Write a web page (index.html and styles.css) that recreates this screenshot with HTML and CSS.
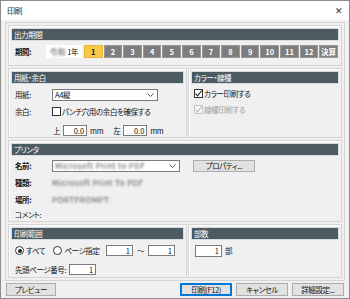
FILE: index.html
```html
<!DOCTYPE html>
<html lang="ja">
<head>
  <meta charset="UTF-8">
  <title>印刷</title>
  <link rel="stylesheet" href="styles.css">
</head>
<body>
  <div class="window">
    <div class="titlebar">
      <span>印刷</span>
      <span class="close">✕</span>
    </div>

    <div class="client">
      <div class="frame">
        <!-- 出力期間 -->
        <section class="panel period">
          <div class="head">出力期間</div>
          <div class="period-row">
            <span class="label bold">期間:</span>
            <span class="year"><span class="blur">令和</span> <span class="soft">1</span>年</span>
            <div class="months">
              <span class="m on">1</span>
              <span class="m">2</span>
              <span class="m">3</span>
              <span class="m">4</span>
              <span class="m">5</span>
              <span class="m">6</span>
              <span class="m">7</span>
              <span class="m">8</span>
              <span class="m">9</span>
              <span class="m">10</span>
              <span class="m">11</span>
              <span class="m">12</span>
              <span class="m">決算</span>
            </div>
          </div>
        </section>

        <div class="split">
          <!-- 用紙・余白 -->
          <section class="panel left paper">
            <div class="head">用紙・余白</div>
            <div class="row r-paper">
              <span class="label">用紙:</span>
              <span class="select w-paper">A4縦<svg class="chev" width="7" height="4" viewBox="0 0 7 4"><path d="M0.5 0.5 L3.5 3.5 L6.5 0.5" fill="none" stroke="#555" stroke-width="1"/></svg></span>
            </div>
            <div class="row r-margin">
              <span class="label">余白:</span>
              <span class="check"><span class="box"></span>パンチ穴用の余白を確保する</span>
            </div>
            <div class="row r-mm">
              <span class="label"></span>
              <span class="mm-item">上<span class="input w-mm">0.0</span>mm</span>
              <span class="mm-item">左<span class="input w-mm">0.0</span>mm</span>
            </div>
          </section>

          <!-- カラー・線種 -->
          <section class="panel right color">
            <div class="head">カラー・線種</div>
            <div class="check c1"><span class="box"><svg width="9" height="9" viewBox="0 0 9 9"><path d="M1.5 4.5 L3.5 6.8 L7.8 1.5" fill="none" stroke="#222" stroke-width="1.1"/></svg></span>カラー印刷する</div>
            <div class="check c2 disabled"><span class="box"><svg width="9" height="9" viewBox="0 0 9 9"><path d="M1.5 4.5 L3.5 6.8 L7.8 1.5" fill="none" stroke="#bbb" stroke-width="1.1"/></svg></span>線種印刷する</div>
          </section>
        </div>

        <!-- プリンタ -->
        <section class="panel printer">
          <div class="head">プリンタ</div>
          <div class="row r-name">
            <span class="label bold">名前:</span>
            <span class="select w-printer"><span class="blur">Microsoft Print to PDF</span><svg class="chev" width="7" height="4" viewBox="0 0 7 4"><path d="M0.5 0.5 L3.5 3.5 L6.5 0.5" fill="none" stroke="#555" stroke-width="1"/></svg></span>
            <span class="btn prop">プロパティ...</span>
          </div>
          <div class="row r-type">
            <span class="label bold">種類:</span>
            <span class="blur">Microsoft Print To PDF</span>
          </div>
          <div class="row r-place">
            <span class="label bold">場所:</span>
            <span class="blur">PORTPROMPT:</span>
          </div>
          <div class="row r-comment">
            <span class="label">コメント:</span>
          </div>
        </section>

        <div class="split">
          <!-- 印刷範囲 -->
          <section class="panel left range">
            <div class="head">印刷範囲</div>
            <div class="row r-radio">
              <span class="radio"><span class="dot on"></span>すべて</span>
              <span class="radio r-pages"><span class="dot"></span>ページ指定</span>
              <span class="input w-page from">1</span>
              <span class="tilde">～</span>
              <span class="input w-page to">1</span>
            </div>
            <div class="row r-first">
              <span>先頭ページ番号:</span>
              <span class="input w-page">1</span>
            </div>
          </section>

          <!-- 部数 -->
          <section class="panel right copies">
            <div class="head">部数</div>
            <div class="row r-copies">
              <span class="input w-copies">1</span>
              <span>部</span>
            </div>
          </section>
        </div>
      </div>

      <div class="buttons">
        <span class="btn preview">プレビュー</span>
        <span class="spacer"></span>
        <span class="btn default">印刷(F12)</span>
        <span class="btn">キャンセル</span>
        <span class="btn">詳細設定...</span>
      </div>
    </div>
  </div>
</body>
</html>
```

FILE: styles.css
```css
/* Windows風の印刷ダイアログ */
body {
  margin: 0;
  background: #fff;
}
.window {
  width: 350px;
  height: 299px;
  box-sizing: border-box;
  border: 1px solid #8c8c8c;
  background: #f0f0f0;
  font-family: "Noto Sans CJK JP", "Noto Sans", sans-serif;
  font-feature-settings: "palt";
  font-size: 7.5px;
  letter-spacing: -0.4px;
  line-height: 1;
  white-space: nowrap;
  color: #111;
  display: flex;
  flex-direction: column;
}
.titlebar {
  flex: none;
  height: 19px;
  background: #fff;
  display: flex;
  align-items: center;
  justify-content: space-between;
  padding: 0 6px;
  font-size: 8px;
  color: #222;
}
.close {
  font-size: 9px;
  color: #333;
}
.client {
  padding: 2px 4px 0;
}
.frame {
  border: 1px solid #d4d4d4;
  padding: 2px;
  display: flex;
  flex-direction: column;
  gap: 2px;
}
.panel {
  border: 1px solid #d4d4d4;
  box-shadow: inset 1px 1px 0 #fff;
  padding: 2px;
}
.head {
  height: 11px;
  line-height: 11px;
  background: #4c5b62;
  border: 1px solid #d8dee0;
  color: #fff;
  padding-left: 2px;
}
.row {
  display: flex;
  align-items: center;
}
.label {
  width: 37px;
  flex: none;
}
.bold {
  font-weight: 700;
}
.blur {
  filter: blur(0.8px);
  color: #555;
  font-size: 8px;
  letter-spacing: 0.4px;
}
.soft {
  filter: blur(0.5px);
}

/* 出力期間 */
.period-row {
  display: flex;
  align-items: center;
  height: 13px;
  margin: 4px 0 5px 4px;
}
.period .label {
  width: 31px;
}
.year {
  width: 36px;
  height: 13px;
  line-height: 13px;
  background: #fff;
  text-align: right;
  padding-right: 4px;
  box-sizing: border-box;
  margin-right: 2px;
}
.year .blur {
  letter-spacing: 0;
}
.months {
  display: flex;
  gap: 1px;
  width: 254px;
}
.m {
  flex: 1;
  height: 13px;
  line-height: 13px;
  text-align: center;
  background: #7d7d7d;
  color: #fff;
  font-weight: 700;
  letter-spacing: 0;
  box-shadow: inset 0 0 0 1px #999;
}
.m.on {
  background: #f7c94a;
  color: #222;
  box-shadow: inset 0 0 0 1px #e7b838;
}

/* 2列の段 */
.split {
  display: flex;
  gap: 1px;
}
.left {
  width: 173px;
  flex: none;
}
.right {
  flex: 1;
}
.paper {
  height: 64px;
}
.r-paper {
  margin: 5px 0 0 4px;
  height: 12px;
}
.r-margin {
  margin: 5px 0 0 4px;
  height: 11px;
}
.r-mm {
  margin: 8px 0 0 4px;
  height: 11px;
}
.select {
  height: 12px;
  line-height: 12px;
  background: #fff;
  border: 1px solid #7a7a7a;
  box-sizing: border-box;
  padding: 0 3px 0 2px;
  display: flex;
  align-items: center;
  justify-content: space-between;
}
.w-paper {
  width: 106px;
}
.w-printer {
  width: 128px;
}
.input {
  display: inline-block;
  height: 11px;
  line-height: 10px;
  background: #fff;
  border: 1px solid #7a7a7a;
  box-sizing: border-box;
  text-align: right;
  padding-right: 2px;
  letter-spacing: 0;
}
.w-mm {
  width: 24px;
  margin: 0 3px 0 3px;
}
.mm-item {
  display: flex;
  align-items: center;
  margin-left: 1px;
  margin-right: 9px;
}
.check {
  display: flex;
  align-items: center;
}
.box {
  width: 9px;
  height: 9px;
  box-sizing: border-box;
  border: 1px solid #333;
  background: #fff;
  margin-right: 1px;
  display: flex;
  align-items: center;
  justify-content: center;
}
.box svg {
  flex: none;
}
.color .c1 {
  margin: 5px 0 0 3px;
}
.color .c2 {
  margin: 7px 0 0 3px;
}
.disabled {
  color: #a0a0a0;
}
.disabled .box {
  border-color: #c4c4c4;
  background: #f7f7f7;
}

/* プリンタ */
.printer {
  height: 76px;
}
.r-name {
  margin: 4px 0 0 4px;
  height: 12px;
}
.r-type {
  margin: 5px 0 0 4px;
  height: 11px;
}
.r-place {
  margin: 6px 0 0 4px;
  height: 11px;
}
.r-comment {
  margin: 4px 0 0 4px;
  height: 11px;
}
.btn {
  display: inline-flex;
  align-items: center;
  justify-content: center;
  height: 12px;
  box-sizing: border-box;
  background: #e1e1e1;
  border: 1px solid #adadad;
}
.prop {
  width: 62px;
  margin-left: 13px;
}

/* 印刷範囲 */
.range {
  height: 48px;
}
.r-radio {
  margin: 5px 0 0 4px;
  height: 11px;
}
.radio {
  display: flex;
  align-items: center;
}
.dot {
  width: 9px;
  height: 9px;
  box-sizing: border-box;
  border: 1px solid #333;
  border-radius: 50%;
  background: #fff;
  margin-right: 2px;
  position: relative;
}
.dot.on::after {
  content: "";
  position: absolute;
  left: 1.5px;
  top: 1.5px;
  width: 4px;
  height: 4px;
  border-radius: 50%;
  background: #222;
}
.r-pages {
  margin-left: 8px;
}
.w-page {
  width: 27px;
}
.from {
  margin-left: auto;
}
.tilde {
  width: 15px;
  text-align: center;
}
.to {
  margin-right: 9px;
}
.r-first {
  margin: 8px 0 0 4px;
  height: 11px;
}
.r-first .input {
  margin-left: 3px;
}
.r-copies {
  margin: 5px 0 0 4px;
  height: 12px;
}
.w-copies {
  width: 27px;
  height: 12px;
  margin-right: 3px;
}

/* 下のボタン */
.buttons {
  display: flex;
  gap: 4px;
  margin-top: 2px;
  padding: 0 1px;
}
.buttons .btn {
  width: 52px;
  height: 13px;
}
.buttons .preview {
  width: 50px;
}
.spacer {
  flex: 1;
}
.btn.default {
  border: 1px solid #0078d7;
  box-shadow: inset 0 0 0 1px #0078d7;
}
```
